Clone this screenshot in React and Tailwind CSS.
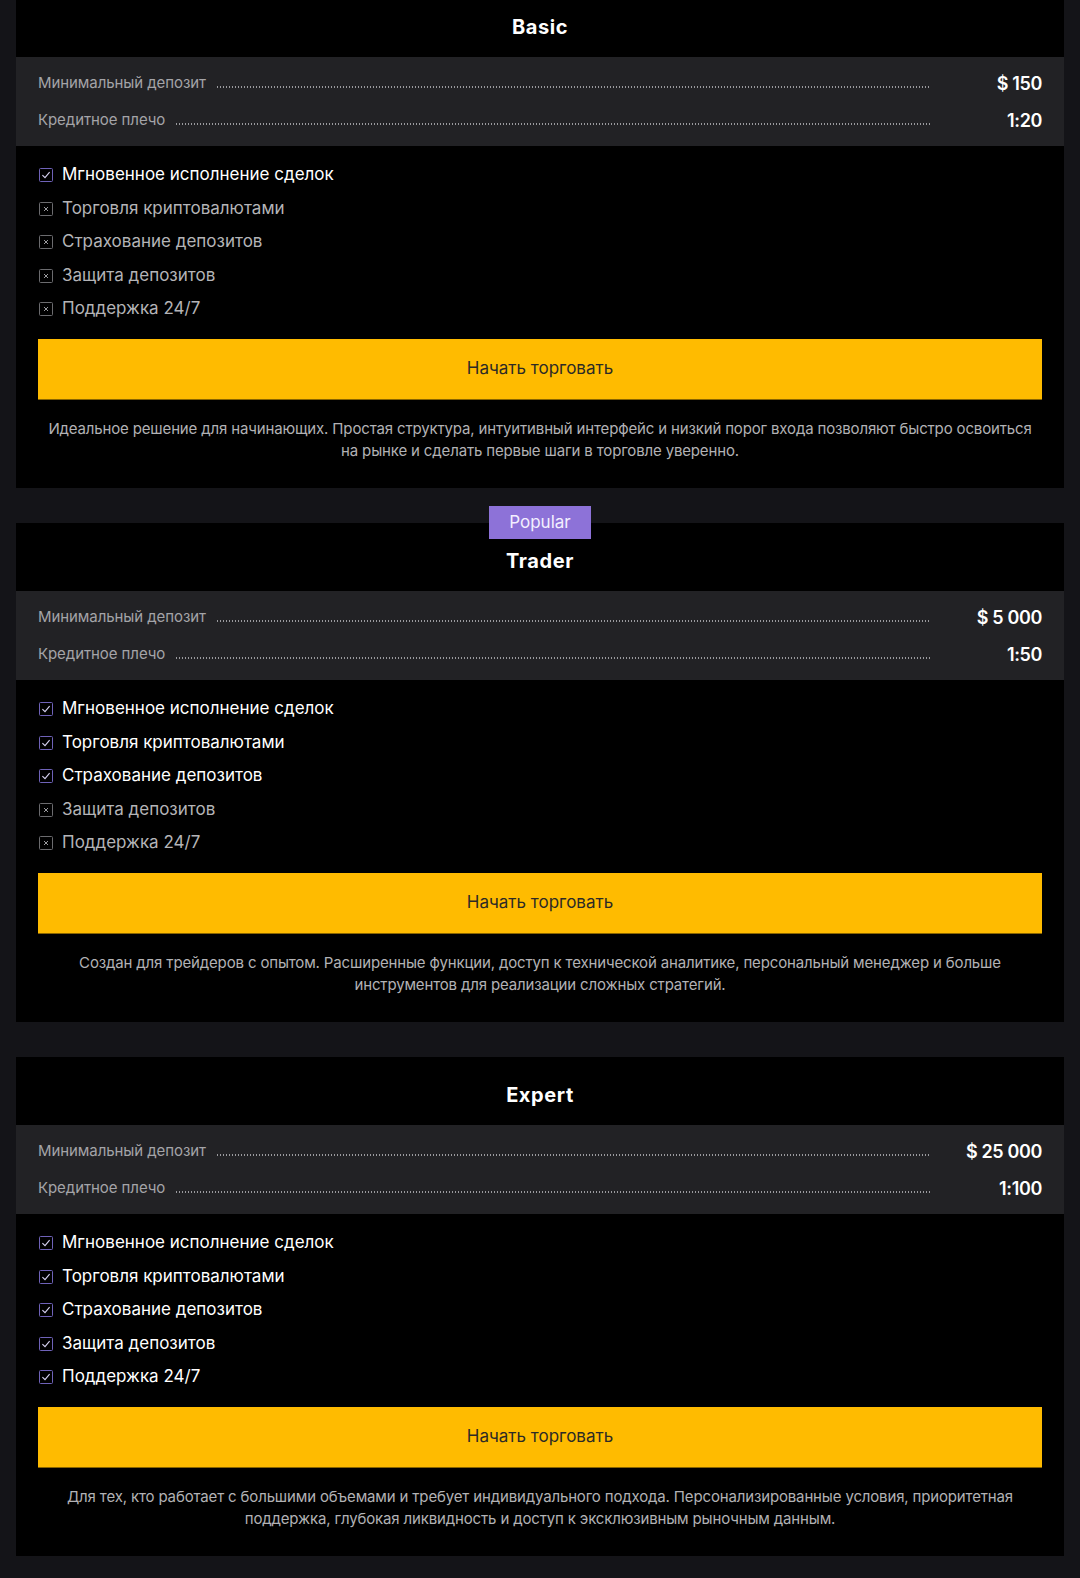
const plans = [
  {
    name: "Basic",
    deposit: "$ 150",
    leverage: "1:20",
    enabled: 1,
    text: "Идеальное решение для начинающих. Простая структура, интуитивный интерфейс и низкий порог входа позволяют быстро освоиться на рынке и сделать первые шаги в торговле уверенно.",
  },
  {
    name: "Trader",
    deposit: "$ 5 000",
    leverage: "1:50",
    enabled: 3,
    popular: true,
    text: "Создан для трейдеров с опытом. Расширенные функции, доступ к технической аналитике, персональный менеджер и больше инструментов для реализации сложных стратегий.",
  },
  {
    name: "Expert",
    deposit: "$ 25 000",
    leverage: "1:100",
    enabled: 5,
    text: "Для тех, кто работает с большими объемами и требует индивидуального подхода. Персонализированные условия, приоритетная поддержка, глубокая ликвидность и доступ к эксклюзивным рыночным данным.",
  },
];

const features = [
  "Мгновенное исполнение сделок",
  "Торговля криптовалютами",
  "Страхование депозитов",
  "Защита депозитов",
  "Поддержка 24/7",
];

const CheckIcon = ({ on }) =>
  on ? (
    <svg width="14" height="14" viewBox="0 0 14 14" className="ml-[1px] shrink-0">
      <rect x="0.5" y="0.5" width="13" height="13" rx="1" fill="none" stroke="#6f62b8" />
      <path d="M3.4 7.1 L6 9.7 L10.6 4.2" fill="none" stroke="#d8d3f2" strokeWidth="1.1" />
    </svg>
  ) : (
    <svg width="14" height="14" viewBox="0 0 14 14" className="ml-[1px] shrink-0">
      <rect x="0.5" y="0.5" width="13" height="13" rx="1" fill="none" stroke="#6b6b6e" />
      <path d="M5 5 L9 9 M9 5 L5 9" fill="none" stroke="#9a9a9d" strokeWidth="1" />
    </svg>
  );

const StatRow = ({ label, value }) => (
  <div className="flex h-[26px] items-center">
    <span className="text-[15px] tracking-[-0.005em] text-[#a4a4a8]">{label}</span>
    <span className="mb-[-7px] ml-[10px] h-[2px] flex-1 bg-[radial-gradient(circle,#9a9a9e_0.75px,transparent_1px)] bg-[length:3px_2px] bg-repeat-x" />
    <span className="w-[111px] text-right text-[18px] font-semibold tracking-[-0.02em] text-white">{value}</span>
  </div>
);

const PlanCard = ({ plan, first }) => (
  <div className={`relative bg-black ${first ? "-mt-[11px]" : ""}`}>
    {plan.popular ? (
      <div className="absolute -top-[17px] left-1/2 flex h-[33px] w-[102px] -translate-x-1/2 items-center justify-center bg-[#8d72d8] text-[17px] text-[#f3efff]">
        Popular
      </div>
    ) : null}
    <div className="pb-[18px] pt-[26px] text-center">
      <h2 className="text-[20px] font-bold leading-[24px] tracking-[0.03em] text-white">{plan.name}</h2>
    </div>
    <div className="flex flex-col gap-[11px] bg-[#222225] px-[22px] py-[13px]">
      <StatRow label="Минимальный депозит" value={plan.deposit} />
      <StatRow label="Кредитное плечо" value={plan.leverage} />
    </div>
    <ul className="flex flex-col gap-[9.5px] px-[22px] pt-[17px]">
      {features.map((item, i) => (
        <li key={item} className="flex h-[24px] items-center gap-[9px]">
          <CheckIcon on={i < plan.enabled} />
          <span className={`text-[17px] ${i < plan.enabled ? "text-white" : "text-[#b4b4b7]"}`}>{item}</span>
        </li>
      ))}
    </ul>
    <div className="px-[22px] pt-[18px]">
      <button className="flex h-[61px] w-full items-center justify-center border-b border-[#8a6500] bg-[#ffbb00] text-[17px] text-[#2c2a26]">
        Начать торговать
      </button>
    </div>
    <p className="px-[22px] pb-[26px] pt-[18px] text-center text-[15px] leading-[22px] tracking-[-0.01em] text-[#b2b2b5]">
      {plan.text}
    </p>
  </div>
);

export default function App() {
  return (
    <div className="min-h-screen overflow-hidden bg-[#141418] px-4 pb-[23px] font-['Inter',sans-serif]">
      <div className="flex flex-col gap-[35px]">
        {plans.map((plan, i) => (
          <PlanCard key={plan.name} plan={plan} first={i === 0} />
        ))}
      </div>
    </div>
  );
}
